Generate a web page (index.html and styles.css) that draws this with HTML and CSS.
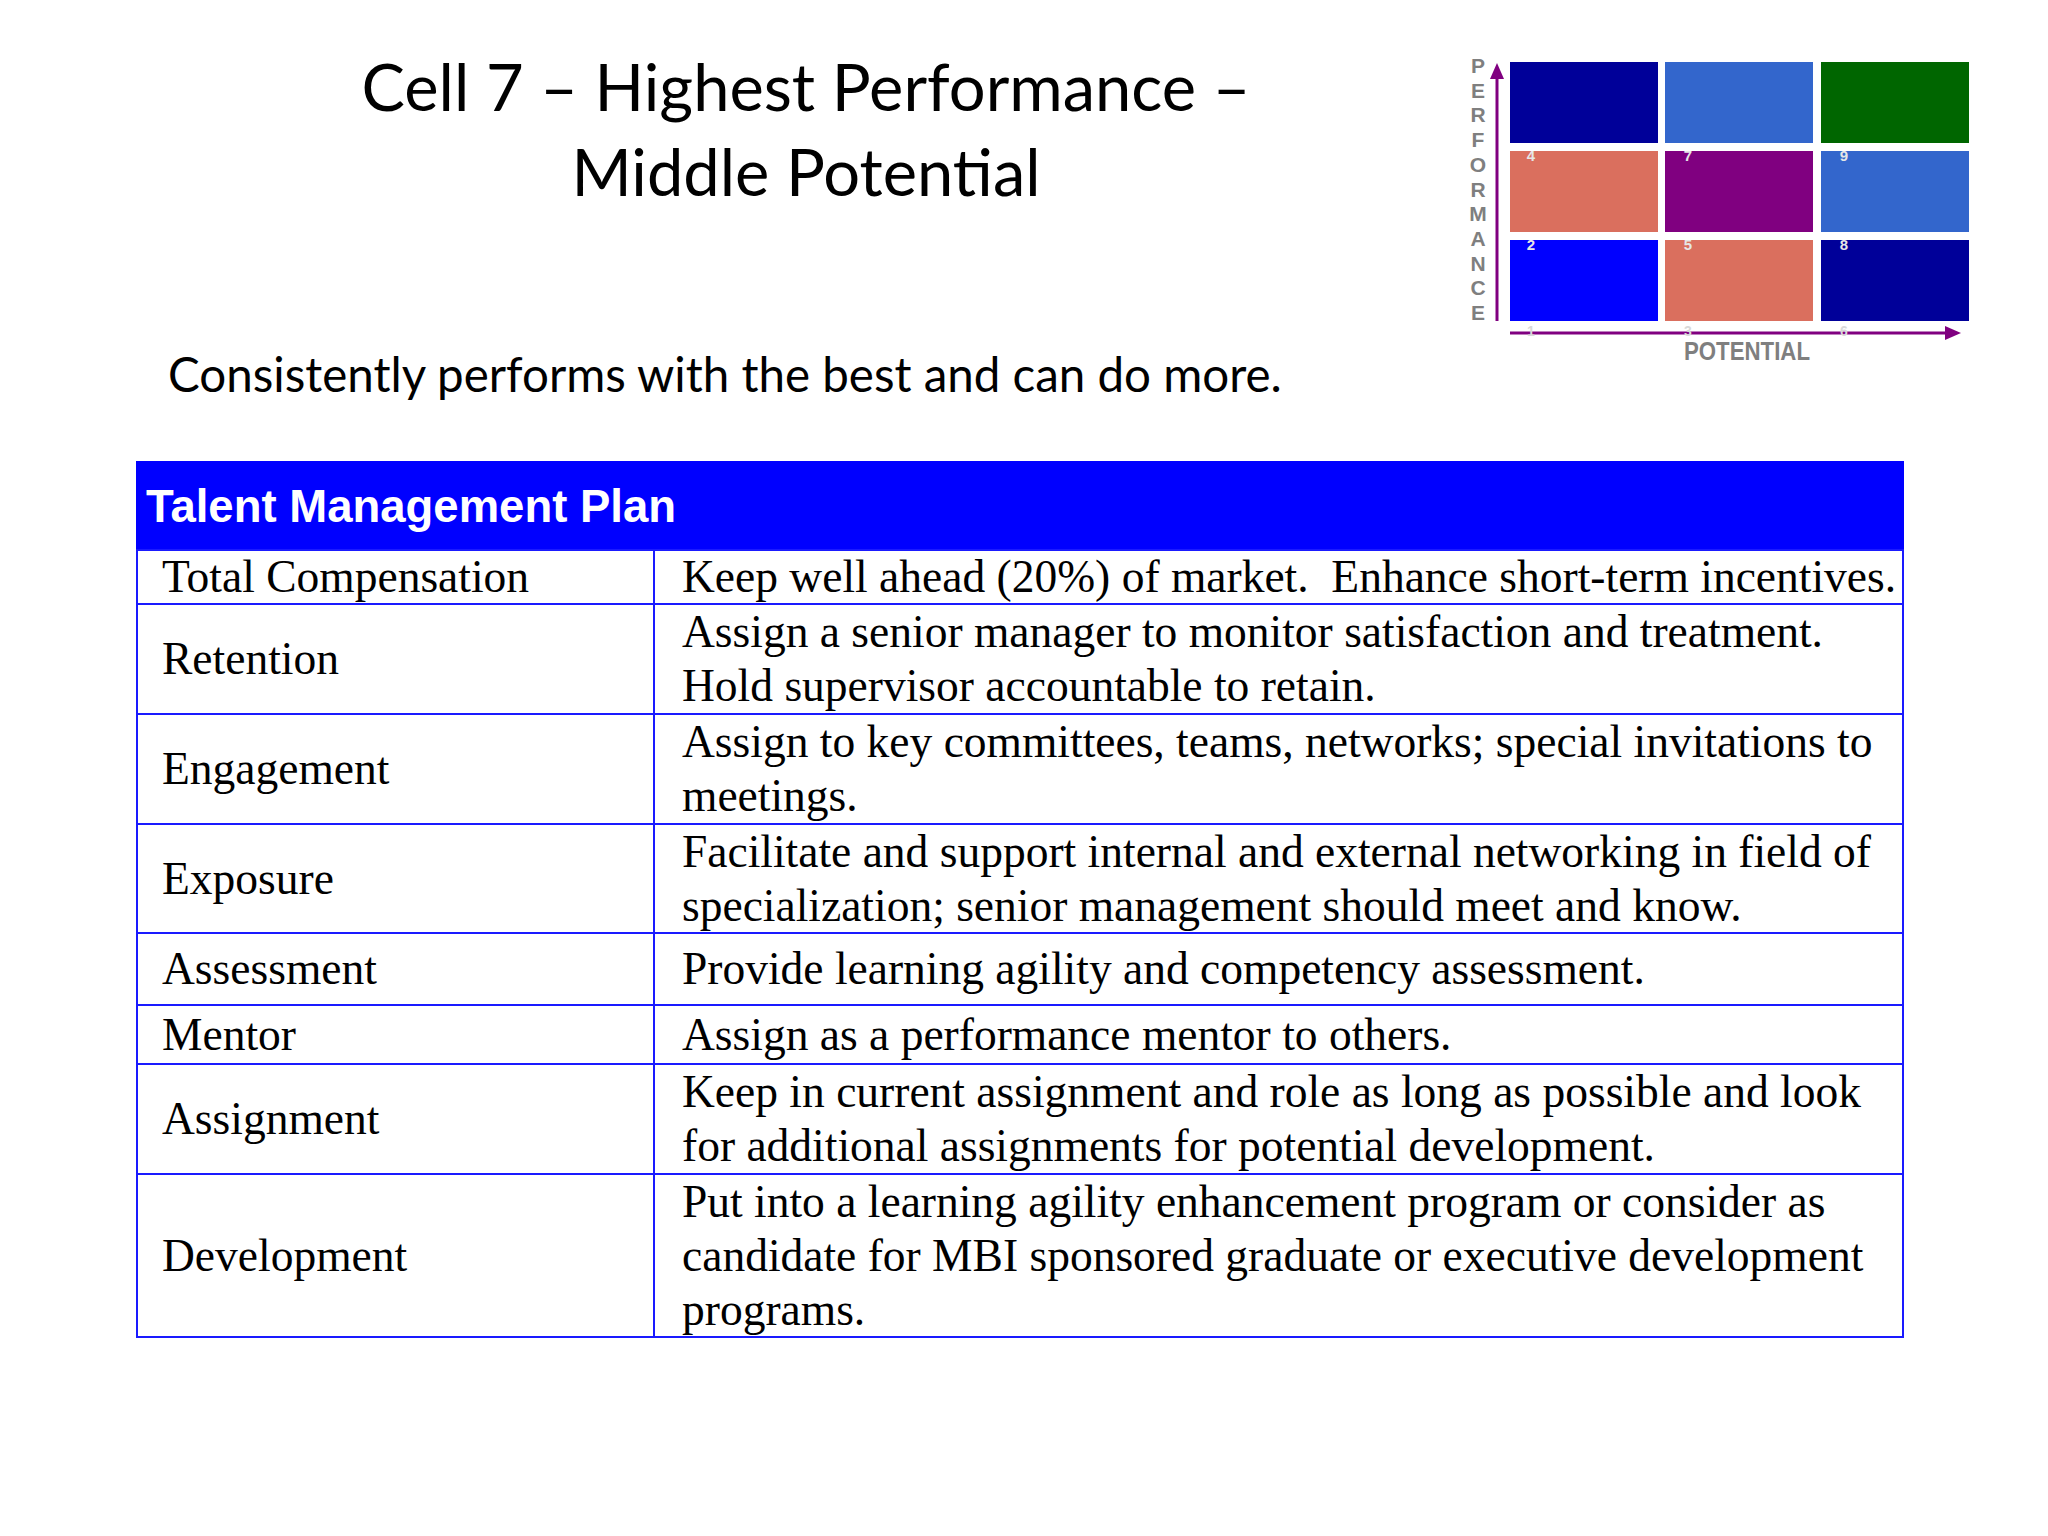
FILE: index.html
```html
<!DOCTYPE html>
<html lang="en">
<head>
<meta charset="utf-8">
<title>Cell 7 – Highest Performance – Middle Potential</title>
<link rel="stylesheet" href="styles.css">
</head>
<body>
<div class="slide">
  <div class="top">
    <div class="heading">
      <h1 class="title">Cell 7 – Highest Performance –<br>Middle Potential</h1>
      <p class="subtitle">Consistently performs with the best and can do more.</p>
    </div>
    <svg class="matrix" width="520" height="330" viewBox="0 0 520 330" xmlns="http://www.w3.org/2000/svg">
      <g class="cells">
        <rect x="50" y="12" width="148" height="81" fill="#000099"/>
        <rect x="205" y="12" width="148" height="81" fill="#3366cc"/>
        <rect x="361" y="12" width="148" height="81" fill="#006600"/>
        <rect x="50" y="101" width="148" height="81" fill="#da6f5e"/>
        <rect x="205" y="101" width="148" height="81" fill="#800080"/>
        <rect x="361" y="101" width="148" height="81" fill="#3366cc"/>
        <rect x="50" y="190" width="148" height="81" fill="#0000ff"/>
        <rect x="205" y="190" width="148" height="81" fill="#da6f5e"/>
        <rect x="361" y="190" width="148" height="81" fill="#000099"/>
      </g>
      <g class="cell-num">
        <text x="71" y="111">4</text>
        <text x="228" y="111">7</text>
        <text x="384" y="111">9</text>
        <text x="71" y="200">2</text>
        <text x="228" y="200">5</text>
        <text x="384" y="200">8</text>
      </g>
      <line x1="37" y1="26" x2="37" y2="271" stroke="#800080" stroke-width="3"/>
      <polygon points="37,13 30,29 44,29" fill="#800080"/>
      <line x1="50" y1="283" x2="487" y2="283" stroke="#800080" stroke-width="3"/>
      <polygon points="501,283 485,276 485,290" fill="#800080"/>
      <g class="axis-num">
        <text x="71" y="286">1</text>
        <text x="228" y="286">3</text>
        <text x="384" y="286">6</text>
      </g>
      <g class="axis-label">
        <text x="18" y="23">P</text>
        <text x="18" y="47.7">E</text>
        <text x="18" y="72.4">R</text>
        <text x="18" y="97.1">F</text>
        <text x="18" y="121.8">O</text>
        <text x="18" y="146.5">R</text>
        <text x="18" y="171.2">M</text>
        <text x="18" y="195.9">A</text>
        <text x="18" y="220.6">N</text>
        <text x="18" y="245.3">C</text>
        <text x="18" y="270">E</text>
      </g>
      <text class="potential" x="224" y="310" textLength="126" lengthAdjust="spacingAndGlyphs">POTENTIAL</text>
    </svg>
  </div>

  <div class="plan">
    <div class="plan-head">Talent Management Plan</div>

    <div class="label">Total Compensation</div>
    <div class="desc">Keep well ahead (20%) of market.&nbsp; Enhance short-term incentives.</div>

    <div class="label">Retention</div>
    <div class="desc">Assign a senior manager to monitor satisfaction and treatment.<br>Hold supervisor accountable to retain.</div>

    <div class="label">Engagement</div>
    <div class="desc">Assign to key committees, teams, networks; special invitations to<br>meetings.</div>

    <div class="label">Exposure</div>
    <div class="desc">Facilitate and support internal and external networking in field of<br>specialization; senior management should meet and know.</div>

    <div class="label">Assessment</div>
    <div class="desc">Provide learning agility and competency assessment.</div>

    <div class="label">Mentor</div>
    <div class="desc">Assign as a performance mentor to others.</div>

    <div class="label">Assignment</div>
    <div class="desc">Keep in current assignment and role as long as possible and look<br>for additional assignments for potential development.</div>

    <div class="label">Development</div>
    <div class="desc">Put into a learning agility enhancement program or consider as<br>candidate for MBI sponsored graduate or executive development<br>programs.</div>
  </div>
</div>
</body>
</html>
```

FILE: styles.css
```css
* { box-sizing: border-box; }

html, body {
  margin: 0;
  padding: 0;
  background: #ffffff;
}

.slide {
  width: 2048px;
  height: 1536px;
  background: #ffffff;
  overflow: hidden;
}

.top {
  display: flex;
  align-items: flex-start;
  padding-left: 166px;
  gap: 14px;
  height: 403px;
}

.heading {
  width: 1280px;
  font-family: Lato, "Open Sans", sans-serif;
  color: #000;
}

.title {
  margin: 44px 0 0 0;
  font-weight: 400;
  font-size: 65px;
  line-height: 85px;
  text-align: center;
}

.subtitle {
  margin: 132px 0 0 2px;
  font-size: 47.5px;
  line-height: 56px;
}

.matrix {
  display: block;
  margin-top: 50px;
  flex: none;
}

.cell-num text {
  font-family: "Liberation Sans", Arial, sans-serif;
  font-weight: 700;
  font-size: 15px;
  fill: #e6e6e6;
  text-anchor: middle;
}

.axis-num text {
  font-family: "Liberation Sans", Arial, sans-serif;
  font-weight: 700;
  font-size: 14px;
  fill: #d9d9d9;
  text-anchor: middle;
}

.axis-label text {
  font-family: "Liberation Sans", Arial, sans-serif;
  font-weight: 700;
  font-size: 21px;
  fill: #7f7f7f;
  text-anchor: middle;
}

.potential {
  font-family: "Liberation Sans", Arial, sans-serif;
  font-weight: 700;
  font-size: 25px;
  fill: #7f7f7f;
}

.plan {
  margin: 58px 0 0 136px;
  width: 1768px;
  display: grid;
  grid-template-columns: 517px 1fr;
  grid-template-rows: 88px 54px 110px 110px 109px 72px 59px 110px 163px;
  border: 2px solid #1a1aff;
  border-top: 0;
  font-family: "Liberation Serif", "Times New Roman", serif;
  font-size: 45.5px;
  line-height: 54px;
  color: #000;
}

.plan-head {
  grid-column: 1 / 3;
  background: #0000ff;
  color: #fff;
  font-family: "Liberation Sans", Arial, sans-serif;
  font-weight: 700;
  font-size: 45.5px;
  line-height: 54px;
  display: flex;
  align-items: center;
  padding: 3px 0 0 10px;
  margin: 0 -2px 0 -2px;
}

.label,
.desc {
  border-top: 2px solid #1a1aff;
  display: flex;
  align-items: center;
  white-space: nowrap;
}

.label {
  border-right: 2px solid #1a1aff;
  padding-left: 24px;
}

.desc {
  padding-left: 27px;
}
```
